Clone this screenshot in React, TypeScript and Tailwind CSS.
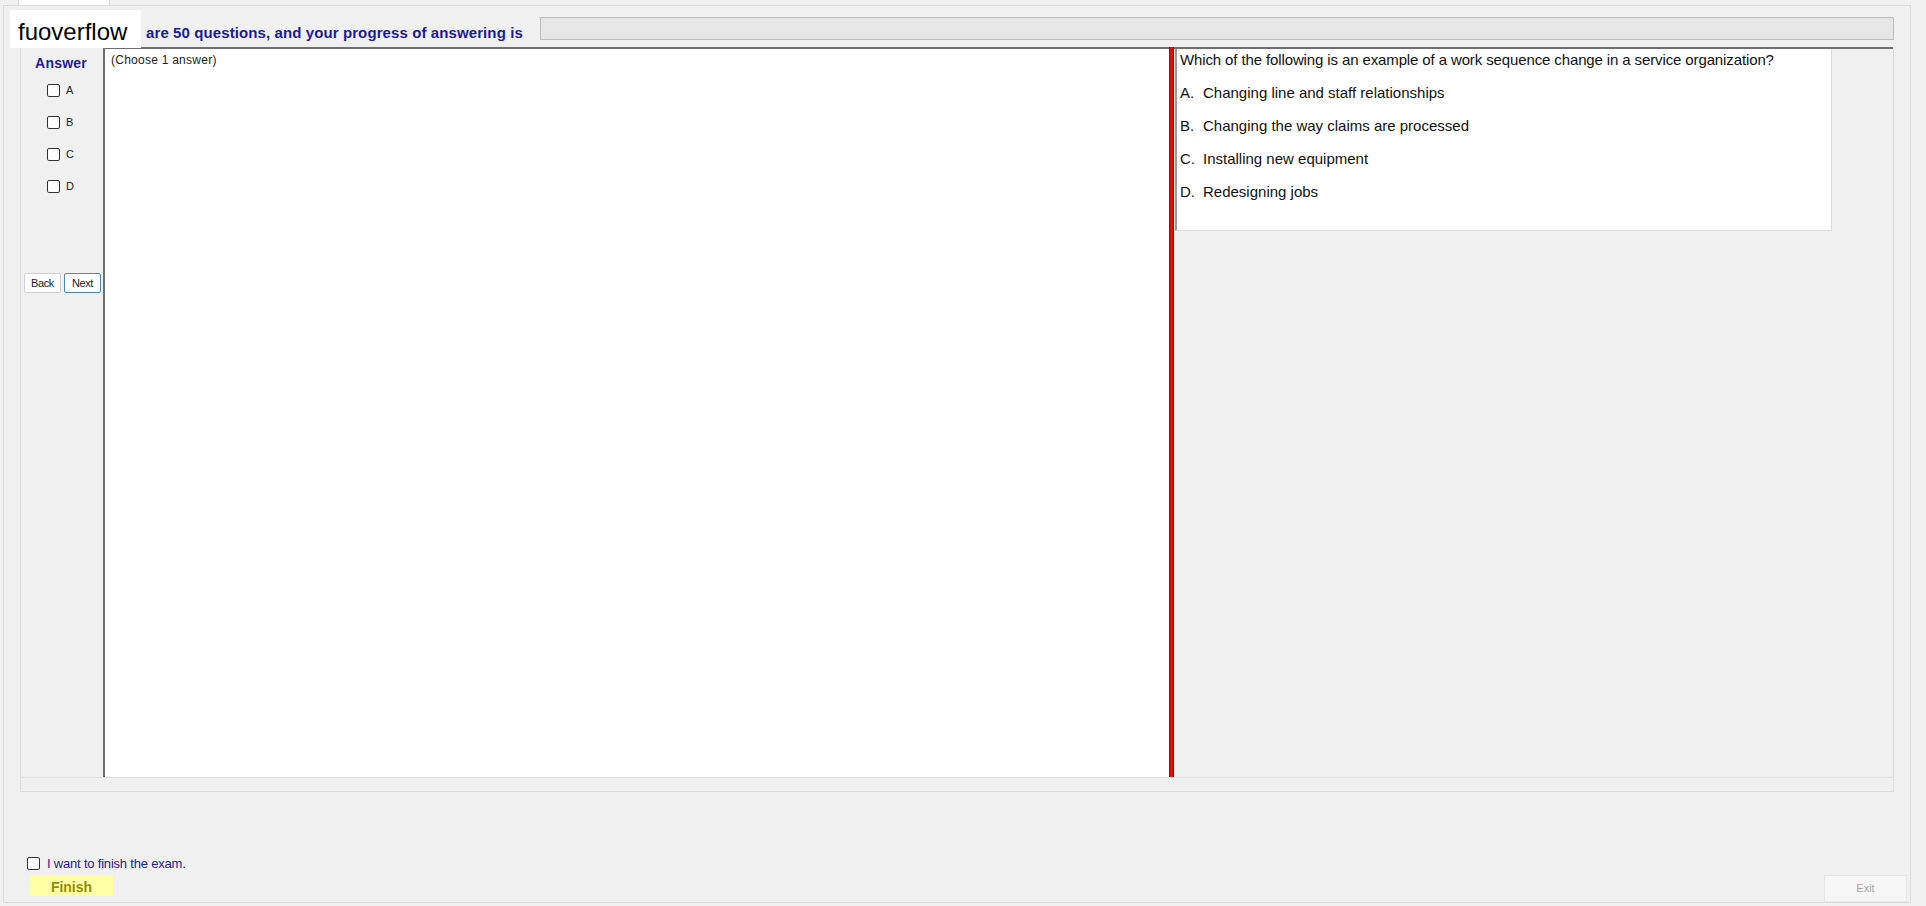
import React from 'react'

const options = [
  { key: 'A', text: 'Changing line and staff relationships' },
  { key: 'B', text: 'Changing the way claims are processed' },
  { key: 'C', text: 'Installing new equipment' },
  { key: 'D', text: 'Redesigning jobs' },
]

function Box({ className = '' }: { className?: string }) {
  return (
    <span
      className={`inline-block w-[13px] h-[13px] shrink-0 rounded-[2px] border border-[#333333] bg-white ${className}`}
    />
  )
}

export default function App() {
  return (
    <div className="w-[1926px] h-[906px] overflow-hidden bg-[#f0f0f0] font-['Liberation_Sans',Arial,sans-serif] text-black">
      {/* tab strip */}
      <div className="h-[5px] flex pl-[18px]">
        <div className="w-[92px] h-[5px] bg-white border-x border-[#dadada]" />
      </div>

      {/* tab page */}
      <div className="ml-[3px] w-[1908px] h-[898px] border border-[#dcdcdc] flex flex-col">
        {/* header */}
        <div className="h-[41px] flex items-start pr-[16px]">
          <div className="ml-[6px] mt-[4px] w-[131px] h-[38px] bg-white px-[8px] pt-[7px] text-[24px] leading-[30px] relative z-10">
            fuoverflow
          </div>
          <div className="ml-[5px] mt-[19px] w-[394px] text-[15px] leading-[16px] font-bold text-[#1c1c96] tracking-[0.1px] whitespace-nowrap">
            are 50 questions, and your progress of answering is
          </div>
          <div className="mt-[11px] flex-1 h-[23px] bg-[#e6e6e6] border border-[#bcbcbc]" />
        </div>

        {/* main group */}
        <div className="mx-[16px] h-[745px] flex flex-col border-x border-b border-[#dcdcdc]">
          <div className="h-[730px] flex">
            {/* answer sidebar */}
            <div className="w-[82px] shrink-0 flex flex-col">
              <div className="pt-[8px] pr-[2px] text-center text-[14px] leading-[16px] font-bold text-[#1c1c96] tracking-[0.2px]">
                Answer
              </div>
              <div className="mt-[11px] flex flex-col gap-[16px] pl-[26px]">
                {options.map((o) => (
                  <div key={o.key} className="h-[16px] flex items-center gap-[6px]">
                    <Box />
                    <span className="text-[11px] text-[#222222]">{o.key}</span>
                  </div>
                ))}
              </div>
              <div className="mt-[79px] flex gap-[3px] pl-[3px]">
                <button className="w-[37px] h-[20px] bg-[#fdfdfd] border border-[#cfcfcf] rounded-[2px] text-[11px] text-[#222222] tracking-[-0.4px]">
                  Back
                </button>
                <button className="w-[37px] h-[20px] bg-[#fbfdff] border border-[#4f86b8] rounded-[2px] text-[11px] text-[#222222] tracking-[-0.4px]">
                  Next
                </button>
              </div>
            </div>

            {/* answer notes area */}
            <div className="w-[1066px] shrink-0 bg-white border-l-2 border-t-2 border-[#6e6e6e] pl-[6px] pt-[4px] text-[12px] leading-[14px] text-[#222222] tracking-[0.25px]">
              (Choose 1 answer)
            </div>

            {/* splitter */}
            <div className="w-[5px] shrink-0 bg-[#e00d0d] border-x border-[#a40000]" />

            {/* question panel */}
            <div className="flex-1 pl-[1px] border-t-2 border-t-[#6e6e6e]">
              <div className="w-[657px] h-[182px] bg-white border-l-2 border-l-[#9a9a9a] border-r border-b border-r-[#dcdcdc] border-b-[#dcdcdc] pl-[3px] pt-[2px] text-[15px] leading-[18px] text-[#111111]">
                <div className="tracking-[-0.12px]">
                  Which of the following is an example of a work sequence change in a service organization?
                </div>
                {options.map((o) => (
                  <div key={o.key} className="mt-[15px] flex">
                    <span className="w-[23px] shrink-0">{o.key}.</span>
                    <span>{o.text}</span>
                  </div>
                ))}
              </div>
            </div>
          </div>
          <div className="flex-1 border-t border-[#e2e2e2]" />
        </div>

        {/* footer */}
        <div className="flex-1 flex flex-col">
          <div className="mt-[65px] ml-[23px] h-[13px] flex items-center gap-[7px]">
            <Box />
            <span className="text-[13px] leading-[14px] text-[#23238f] tracking-[-0.2px]">I want to finish the exam.</span>
          </div>
          <div className="mt-[5px] flex items-start justify-between pl-[26px] pr-[3px]">
            <button className="w-[83px] h-[21px] bg-[#ffffa6] pt-[2px] text-[14px] leading-[18px] font-bold text-[#8e8e08]">
              Finish
            </button>
            <button className="w-[83px] h-[27px] bg-[#f6f6f6] border border-[#e6e6e6] text-[11px] text-[#a5a5a5]">
              Exit
            </button>
          </div>
        </div>
      </div>
    </div>
  )
}
